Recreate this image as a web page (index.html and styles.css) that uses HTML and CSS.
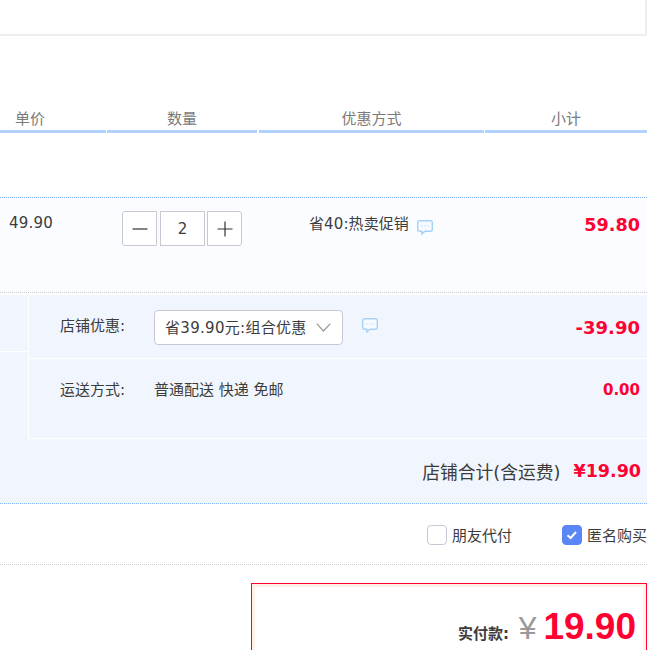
FILE: index.html
```html
<!DOCTYPE html>
<html lang="zh">
<head>
<meta charset="utf-8">
<title>确认订单</title>
<link rel="stylesheet" href="styles.css">
</head>
<body>
<div class="page">
  <div class="top-box"></div>
  <div class="heads">
    <div class="head h-price"><span>单价</span></div>
    <div class="head h-qty"><span>数量</span></div>
    <div class="head h-promo"><span>优惠方式</span></div>
    <div class="head h-sub"><span>小计</span></div>
  </div>
  <div class="item">
    <div class="c-price">49.90</div>
    <div class="c-qty">
      <div class="stepper">
        <span class="step step-l"><svg width="16" height="16" viewBox="0 0 16 16"><path d="M0.5 8H15.5" stroke="#333" stroke-width="1.2"/></svg></span>
        <span class="step-num">2</span>
        <span class="step step-r"><svg width="16" height="16" viewBox="0 0 16 16"><path d="M0.5 8H15.5M8 0.5V15.5" stroke="#333" stroke-width="1.2"/></svg></span>
      </div>
    </div>
    <div class="c-promo">省40:热卖促销
      <svg class="bubble" width="16" height="15" viewBox="0 0 16 15"><path d="M2.5 0.7H13.5A1.8 1.8 0 0 1 15.3 2.5V9.5A1.8 1.8 0 0 1 13.5 11.3H8L4.8 14V11.3H2.5A1.8 1.8 0 0 1 0.7 9.5V2.5A1.8 1.8 0 0 1 2.5 0.7Z" fill="#f4faff" stroke="#a6d2f5" stroke-width="1.4"/><path d="M4.5 6H5.5M7.5 6H8.5M10.5 6H11.5" stroke="#a6d2f5"/></svg>
    </div>
    <div class="c-sub money">59.80</div>
  </div>
  <div class="shop">
    <div class="shop-side"></div>
    <div class="shop-main">
      <div class="opt opt-promo">
        <span class="opt-label opt-label-up">店铺优惠:</span>
        <div class="select">省39.90元:组合优惠
          <svg class="chev" width="15" height="9" viewBox="0 0 15 9"><path d="M0.7 0.7L7.5 8L14.3 0.7" fill="none" stroke="#999" stroke-width="1.2"/></svg>
        </div>
        <svg class="bubble-b" width="16" height="15" viewBox="0 0 16 15"><path d="M2.5 0.7H13.5A1.8 1.8 0 0 1 15.3 2.5V9.5A1.8 1.8 0 0 1 13.5 11.3H8L4.8 14V11.3H2.5A1.8 1.8 0 0 1 0.7 9.5V2.5A1.8 1.8 0 0 1 2.5 0.7Z" fill="#f4faff" stroke="#a6d2f5" stroke-width="1.4"/><path d="M4.5 6H5.5M7.5 6H8.5M10.5 6H11.5" stroke="#a6d2f5"/></svg>
        <span class="money opt-money">-39.90</span>
      </div>
      <div class="opt opt-ship">
        <span class="opt-label">运送方式:</span>
        <span class="ship-text">普通配送 快递 免邮</span>
        <span class="money ship-money">0.00</span>
      </div>
    </div>
  </div>
  <div class="total">
    <span class="total-label">店铺合计(含运费)</span>
    <span class="total-money">¥19.90</span>
  </div>
  <div class="checks">
    <label class="check"><span class="box"></span><span class="check-text">朋友代付</span></label>
    <label class="check"><span class="box box-on"><svg width="14" height="12" viewBox="0 0 14 12"><path d="M2.5 6.2L5.6 9L11 3" fill="none" stroke="#fff" stroke-width="2"/></svg></span><span class="check-text">匿名购买</span></label>
  </div>
  <div class="pay-wrap">
    <div class="pay">
      <span class="pay-label">实付款:</span>
      <span class="pay-yen">¥</span>
      <span class="pay-num">19.90</span>
    </div>
  </div>
</div>
</body>
</html>
```

FILE: styles.css
```css
* { box-sizing: border-box; }
html, body { margin: 0; padding: 0; background: #fff; height: 650px; overflow: hidden; }
body { font-family: "DejaVu Sans", "Noto Sans CJK SC", sans-serif; font-size: 15px; color: #3c3c3c; }
.page { width: 647px; height: 650px; overflow: hidden; }
.top-box { height: 36px; border-bottom: 2px solid #eee; border-right: 2px solid #eee; }
.heads { display: flex; height: 97px; align-items: flex-end; }
.head { height: 23px; border-bottom: 3px solid #b2d1ff; color: #7a7a7a; line-height: 18px; text-align: center; }
.h-price { width: 106px; margin-right: 1px; text-align: left; padding-left: 15px; }
.h-qty { width: 150px; margin-right: 2px; }
.h-promo { width: 225px; margin-right: 1px; }
.h-sub { flex: 1; }
.item { display: flex; margin-top: 64px; height: 96px; background: #fbfcff; border-top: 1px dotted #80b2ff; border-bottom: 1px dotted #ccc; }
.c-price { width: 122px; padding: 15px 0 0 9px; line-height: 20px; letter-spacing: 0.2px; }
.c-qty { width: 184px; padding-top: 13px; }
.stepper { display: flex; gap: 2px; }
.step, .step-num { height: 35px; border: 1px solid #c8c9d4; display: flex; align-items: center; justify-content: center; background: #fff; }
.step { width: 35px; }
.step-l { border-radius: 3px 0 0 3px; margin-right: 1px; }
.step-r { border-radius: 0 3px 3px 0; }
.step-num { width: 45px; }
.c-promo { flex: 1; padding: 16px 0 0 3px; line-height: 20px; white-space: nowrap; letter-spacing: 0.1px; }
.bubble { vertical-align: -6px; margin-left: 3px; }
.c-sub { width: 120px; padding: 16px 7px 0 0; text-align: right; font-size: 17.6px; line-height: 22px; }
.money { color: #f03; font-weight: 700; }
.shop { display: flex; margin-top: 2px; height: 144px; background: #f1f6fe; }
.shop-side { width: 29px; border-right: 1px solid #fff; background: linear-gradient(#f1f6fe 56px, #fff 56px, #fff 57px, #f1f6fe 57px); }
.shop-main { flex: 1; }
.opt { display: flex; align-items: center; padding-left: 31px; padding-right: 7px; }
.opt-promo { height: 64px; border-bottom: 1px solid #fff; padding-top: 2px; }
.opt-ship { height: 80px; border-bottom: 1px solid #fff; padding-bottom: 17px; }
.opt-label { width: 94px; line-height: 20px; }
.opt-label-up { margin-top: -4px; }
.select { width: 189px; height: 35px; border: 1px solid #c8c9d4; border-radius: 4px; background: #fff; display: flex; align-items: center; padding: 0 0 2px 10px; position: relative; white-space: nowrap; letter-spacing: 0.3px; }
.chev { position: absolute; right: 11px; top: 12px; }
.bubble-b { margin-left: 19px; margin-top: -4px; }
.opt-money { margin-left: auto; font-size: 18px; }
.ship-text { white-space: nowrap; line-height: 20px; }
.ship-money { margin-left: auto; font-size: 15px; }
.total { height: 65px; background: #f1f6fe; border-bottom: 1px dotted #80b2ff; display: flex; justify-content: flex-end; align-items: center; padding-right: 6px; gap: 13px; }
.total-label { font-size: 17.8px; }
.total-money { color: #f03; font-weight: 700; font-size: 17.5px; }
.checks { height: 61px; border-bottom: 1px dotted #ccc; display: flex; justify-content: flex-end; align-items: center; gap: 50px; white-space: nowrap; padding-top: 2px; }
.check { display: flex; align-items: center; gap: 5px; color: #3c3c3c; }
.check-text { margin-bottom: 2px; }
.box { width: 20px; height: 20px; border: 1px solid #c8c9d4; border-radius: 4px; background: #fff; display: flex; align-items: center; justify-content: center; }
.box-on { background: #5a86f8; border-color: #5a86f8; }
.pay-wrap { padding: 18px 0 0 251px; }
.pay { height: 100px; border: 1px solid #f03; box-shadow: inset 0 0 0 3px #fff0e8; text-align: right; padding: 21px 10px 0 0; white-space: nowrap; line-height: 44px; }
.pay-label { font-weight: 700; font-size: 15px; margin-right: 5px; }
.pay-yen { font-size: 32px; color: #999; font-family: "Liberation Sans", sans-serif; margin-right: 2px; }
.pay-num { font-size: 37px; font-weight: 700; color: #f03; font-family: "Liberation Sans", sans-serif; }
```
